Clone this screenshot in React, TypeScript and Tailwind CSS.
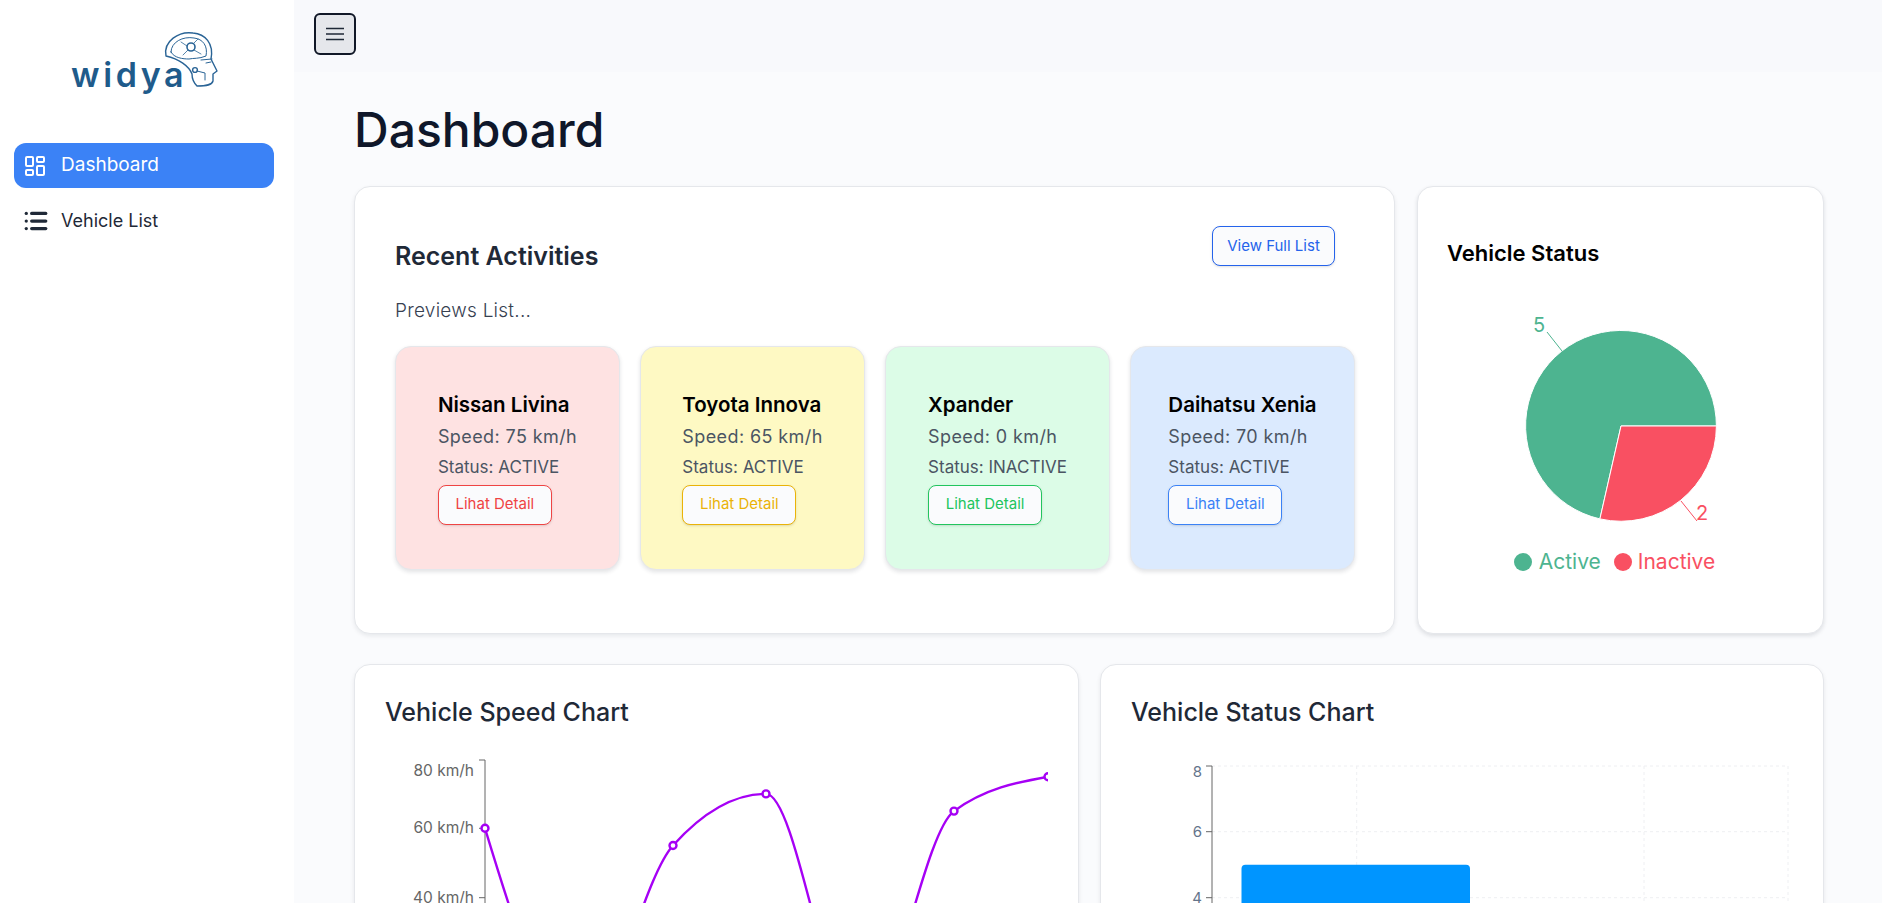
import { LayoutDashboard, List } from 'lucide-react';

const vehicles = [
    { name: 'Nissan Livina', speed: 75, status: 'ACTIVE', bg: 'bg-[#fee2e2]', btn: 'border-[#ef4444] text-[#ef4444]' },
    { name: 'Toyota Innova', speed: 65, status: 'ACTIVE', bg: 'bg-[#fef9c3]', btn: 'border-[#eab308] text-[#eab308]' },
    { name: 'Xpander', speed: 0, status: 'INACTIVE', bg: 'bg-[#dcfce7]', btn: 'border-[#22c55e] text-[#22c55e]' },
    { name: 'Daihatsu Xenia', speed: 70, status: 'ACTIVE', bg: 'bg-[#dbeafe]', btn: 'border-[#3b82f6] text-[#3b82f6]' },
];

const speedPoints: [number, number][] = [
    [99, 79.3],
    [193, 285.7],
    [287, 96.5],
    [380, 44.9],
    [474, 285.7],
    [568, 62.1],
    [662, 27.7],
];

// same curve shape as a monotone-x line chart
const monotonePath = (pts: [number, number][]) => {
    const n = pts.length;
    const s: number[] = [];
    for (let i = 0; i < n - 1; i++) s.push((pts[i + 1][1] - pts[i][1]) / (pts[i + 1][0] - pts[i][0]));
    const t: number[] = [];
    for (let i = 1; i < n - 1; i++) {
        const h0 = pts[i][0] - pts[i - 1][0];
        const h1 = pts[i + 1][0] - pts[i][0];
        const p = (s[i - 1] * h1 + s[i] * h0) / (h0 + h1);
        t[i] = (Math.sign(s[i - 1]) + Math.sign(s[i])) * Math.min(Math.abs(s[i - 1]), Math.abs(s[i]), 0.5 * Math.abs(p)) || 0;
    }
    t[0] = (3 * s[0] - t[1]) / 2;
    t[n - 1] = (3 * s[n - 2] - t[n - 2]) / 2;
    let d = `M${pts[0][0]},${pts[0][1]}`;
    for (let i = 0; i < n - 1; i++) {
        const dx = (pts[i + 1][0] - pts[i][0]) / 3;
        d += `C${pts[i][0] + dx},${pts[i][1] + dx * t[i]} ${pts[i + 1][0] - dx},${pts[i + 1][1] - dx * t[i + 1]} ${pts[i + 1][0]},${pts[i + 1][1]}`;
    }
    return d;
};

const Logo = () => (
    <div className="relative w-[146px] h-[56px]">
        <span className="absolute left-0 bottom-[-3px] text-[34px] leading-[42px] font-semibold tracking-[3.6px] text-[#1f5b8b]">widya</span>
        <svg className="absolute left-[88px] top-[-9px]" width="64" height="64" viewBox="0 0 64 64" fill="none" stroke="#2a6496" strokeWidth="1.4" strokeLinejoin="round" strokeLinecap="round">
            <path d="M7 28C4 13 20 3 34 5C46 6 55 15 52 31L58 43L54 46L54 53C53 57 48 58 38 58C34 54 33 50 33 46C30 38 20 31 7 28Z" />
            <path d="M12 24C12 14 24 8 35 10C44 11 49 18 47 28C40 31 34 30 30 31C24 31 15 30 12 24Z" strokeWidth="1" />
            <circle cx="32" cy="19" r="4" strokeWidth="1.6" />
            <path d="M28 18L22 14M35 15L39 11M35 22L42 26M29 22L24 27" strokeWidth="0.8" />
            <circle cx="36" cy="42" r="2.4" />
            <path d="M38 43L46 45L46 52M42 32L53 31M47 35L52 34" strokeWidth="1" />
        </svg>
    </div>
);

const Sidebar = () => (
    <aside className="w-[294px] shrink-0 bg-white pl-[14px] pr-[20px]">
        <div className="h-[143px] pt-[37px] pl-[57px]">
            <Logo />
        </div>
        <nav className="flex flex-col gap-[10px]">
            <a className="flex items-center h-[45px] rounded-xl bg-[#3b82f6] pl-[9px] text-white text-[19px]">
                <LayoutDashboard size={24} className="mr-[14px]" />
                Dashboard
            </a>
            <a className="flex items-center h-[45px] rounded-xl pl-[9px] text-[#1f2937] text-[18px]">
                <List size={26} strokeWidth={3} className="mr-[12px]" />
                Vehicle List
            </a>
        </nav>
    </aside>
);

const VehicleCard = ({ name, speed, status, bg, btn }: (typeof vehicles)[number]) => (
    <div className={`flex items-center justify-center h-[224px] rounded-2xl border border-[#e5e7eb] shadow-[0_2px_4px_rgba(15,23,42,0.12)] ${bg}`}>
        <div>
            <h3 className="text-[20.5px] leading-[26px] font-semibold text-black mb-1">{name}</h3>
            <p className="text-[18px] leading-[30px] tracking-[0.4px] text-[#4b5563]">Speed: {speed} km/h</p>
            <p className="text-[17px] leading-[30px] text-[#4b5563]">Status: {status}</p>
            <button className={`mt-[3px] block w-[114px] h-[40px] rounded-lg border bg-[#fafbfd] text-[15px] shadow-sm ${btn}`}>Lihat Detail</button>
        </div>
    </div>
);

const RecentActivities = () => (
    <section className="rounded-2xl border border-[#e5e7eb] bg-white pl-[40px] pr-[39px] pt-[39px] pb-[63px] shadow-[0_2px_4px_rgba(15,23,42,0.08)]">
        <div className="flex items-start justify-between">
            <h2 className="mt-[14px] text-[25px] leading-[32px] font-semibold text-[#1f2937]">Recent Activities</h2>
            <button className="mr-[20px] h-[40px] w-[123px] rounded-lg border border-[#2563eb] bg-[#fafbfd] text-[15px] text-[#2563eb] shadow-sm">View Full List</button>
        </div>
        <p className="mt-[25px] text-[19px] leading-[28px] tracking-[0.25px] font-light text-[#374151]">Previews List...</p>
        <div className="mt-[21px] grid grid-cols-4 gap-5">
            {vehicles.map((v) => (
                <VehicleCard key={v.name} {...v} />
            ))}
        </div>
    </section>
);

const VehicleStatus = () => (
    <section className="flex flex-col rounded-2xl border border-[#e5e7eb] bg-white px-[29px] pt-[51px] shadow-[0_2px_4px_rgba(15,23,42,0.12)]">
        <h2 className="text-[22px] leading-[30px] font-semibold text-black">Vehicle Status</h2>
        <svg className="mx-auto mt-[31px]" width="320" height="240" viewBox="0 0 320 240">
            <path d="M160 127L138.9 219.9A95.4 95.4 0 1 1 255.4 127Z" fill="#4db490" stroke="#fff" />
            <path d="M160 127L255.4 127A95.4 95.4 0 0 1 138.9 219.9Z" fill="#f95062" stroke="#fff" />
            <path d="M101 52L86 33" stroke="#4db490" fill="none" />
            <path d="M220 202L236 222" stroke="#f95062" fill="none" />
            <text x="78" y="33" textAnchor="middle" fontSize="20" fill="#4db490">5</text>
            <text x="241" y="221" textAnchor="middle" fontSize="20" fill="#f95062">2</text>
        </svg>
        <div className="mt-[10px] flex items-center justify-center gap-[13px] pr-[12px] text-[21px] leading-[26px]">
            <span className="flex items-center gap-[7px] text-[#4db490]">
                <span className="w-[18px] h-[18px] rounded-full bg-[#4db490]" />
                Active
            </span>
            <span className="flex items-center gap-[6px] text-[#f95062]">
                <span className="w-[18px] h-[18px] rounded-full bg-[#f95062]" />
                Inactive
            </span>
        </div>
    </section>
);

const SpeedChart = () => (
    <svg className="block ml-px" width="662" height="170" viewBox="0 0 662 170">
        <path d="M99 11L99 170M93 11L99 11M93 79.3L99 79.3M93 148.7L99 148.7" stroke="#666" fill="none" />
        <g fontSize="15.5" fill="#666" textAnchor="end">
            <text x="88" y="27">80 km/h</text>
            <text x="88" y="84">60 km/h</text>
            <text x="88" y="154">40 km/h</text>
        </g>
        <path d={monotonePath(speedPoints)} stroke="#a600f5" strokeWidth="2.4" fill="none" />
        {speedPoints.map(([x, y]) => (
            <circle key={x} cx={x} cy={y} r="3.5" fill="#fff" stroke="#a600f5" strokeWidth="2.4" />
        ))}
    </svg>
);

const StatusChart = () => (
    <svg className="block" width="661" height="170" viewBox="0 0 661 170">
        <path d="M80 17L656 17M80 82.7L656 82.7M80 148.7L656 148.7M224.7 17L224.7 170M512 17L512 170M656 17L656 170" stroke="#eeeff2" strokeDasharray="3 3" fill="none" />
        <path d="M80 17L80 170M74 17L80 17M74 82.7L80 82.7M74 148.7L80 148.7" stroke="#666" fill="none" />
        <g fontSize="15" fill="#64748b" textAnchor="end">
            <text x="70" y="28">8</text>
            <text x="70" y="88">6</text>
            <text x="70" y="154">4</text>
        </g>
        <path d="M109.5 170L109.5 119.7A4 4 0 0 1 113.5 115.7L334 115.7A4 4 0 0 1 338 119.7L338 170Z" fill="#0095ff" />
    </svg>
);

const ChartCard = ({ title, children }: { title: string; children: React.ReactNode }) => (
    <section className="h-[400px] rounded-2xl border border-[#e5e7eb] bg-white px-[30px] pt-[31px] shadow-[0_2px_4px_rgba(15,23,42,0.08)]">
        <h2 className="mb-[21px] text-[25px] leading-[32px] font-medium text-[#1f2937]">{title}</h2>
        {children}
    </section>
);

export default function App() {
    return (
        <div className="flex h-[903px] overflow-hidden font-[Inter,sans-serif]">
            <Sidebar />
            <main className="flex-1 min-w-0 bg-[#fafbfd]">
                <header className="h-[72px] bg-[#f8f9fc] pl-[20px] pt-[13px]">
                    <button className="flex items-center justify-center w-[42px] h-[42px] rounded-md border-2 border-[#111827] bg-[#e5e7eb]">
                        <svg width="20" height="20" viewBox="0 0 20 20" fill="none" stroke="#1f2937" strokeWidth="1.4">
                            <path d="M1 4.5H19M1 10H19M1 15.5H19" />
                        </svg>
                    </button>
                </header>
                <div className="pl-[60px] pr-[58px] pt-[30px]">
                    <h1 className="text-[48px] leading-[56px] font-medium text-[#0f172a] mb-[28px]">Dashboard</h1>
                    <div className="grid grid-cols-[1041px_407px] gap-[22px]">
                        <RecentActivities />
                        <VehicleStatus />
                    </div>
                    <div className="mt-[30px] grid grid-cols-[725px_724px] gap-[21px]">
                        <ChartCard title="Vehicle Speed Chart">
                            <SpeedChart />
                        </ChartCard>
                        <ChartCard title="Vehicle Status Chart">
                            <div className="ml-[1px]">
                                <StatusChart />
                            </div>
                        </ChartCard>
                    </div>
                </div>
            </main>
        </div>
    );
}
